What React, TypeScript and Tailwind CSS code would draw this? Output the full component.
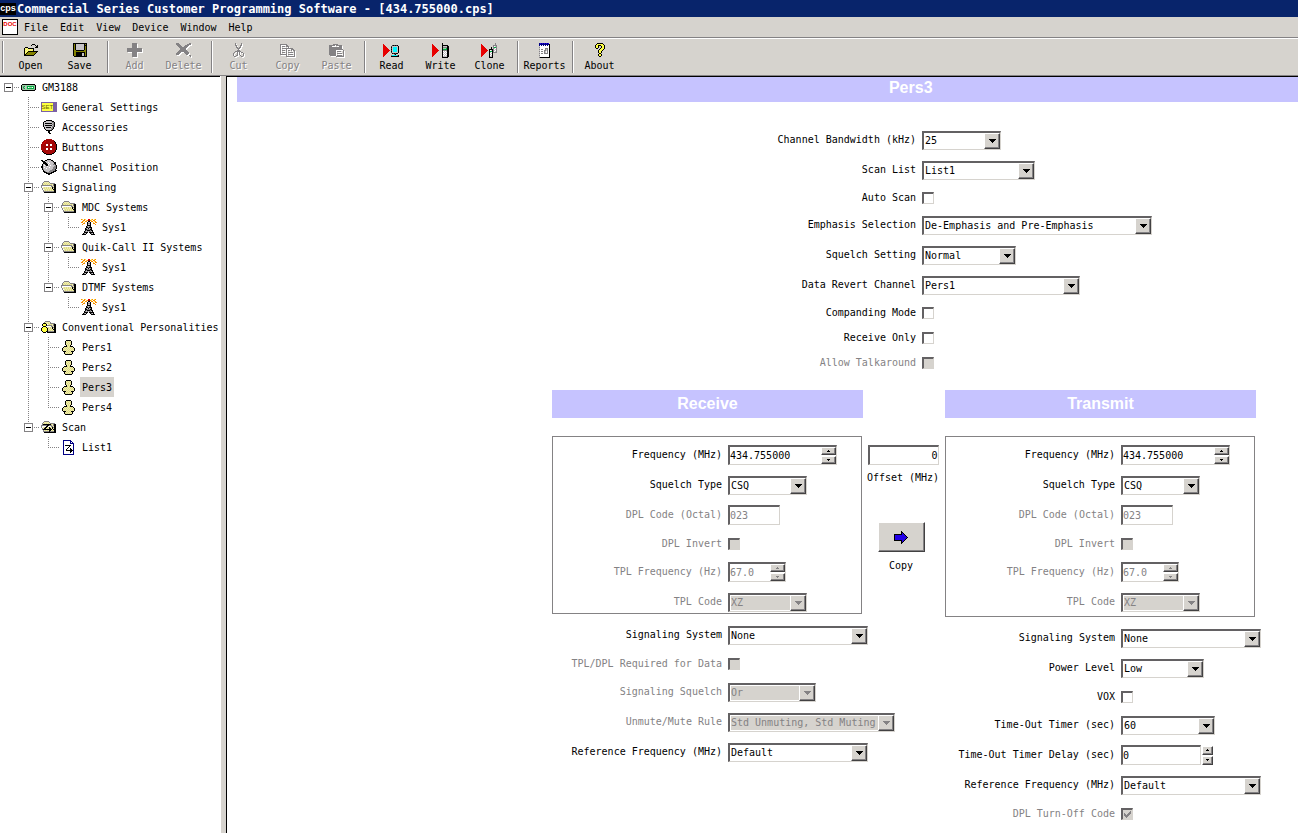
import { useId } from "react";
import type { ReactNode } from "react";
import { clsx } from "clsx";

const PALETTE: Record<string, string> = {
  k: "#000000",
  w: "#ffffff",
  g: "#848284",
  l: "#c6c3c6",
  d: "#424142",
  y: "#ffff42",
  e: "#dedb84",
  v: "#efebad",
  o: "#848200",
  c: "#00f3ff",
  r: "#e70000",
  m: "#a50808",
  b: "#2100e7",
  u: "#000084",
  n: "#00ae42",
  t: "#9ccfa5",
  f: "#f78a00",
  s: "#ffdb42",
};

// Each sprite is a list of pixel rows, one palette letter per pixel.
const SPRITES: Record<string, string[]> = {
  open: [
    ".........kkk....",
    "........k...k.k.",
    ".............kk.",
    "..kkk.......kkk.",
    ".kvyvkkkkkk.....",
    ".kyvyvyvyvk.....",
    ".kvyvyvyvyk.....",
    ".kyvykkkkkkkkkk.",
    ".kvykooooooook..",
    ".kykooooooook...",
    ".kkooooooook....",
    ".kkkkkkkkkk.....",
  ],
  save: [
    "kkkkkkkkkkkkkk",
    "kokllllllllkok",
    "kokllllllllkkk",
    "kokllllllllkok",
    "kokllllllllkok",
    "kokllllllllkok",
    "kokllllllllkok",
    "kookkkkkkkkook",
    "kooooooooooook",
    "kookkkkkkkkkok",
    "kookkkkkkllkok",
    "kookkkkkkllkok",
    "kookkkkkkllkok",
    ".kkkkkkkkkkkkk",
  ],
  add: [
    ".....ggggg.....",
    ".....ggggg.....",
    ".....ggggg.....",
    ".....ggggg.....",
    ".....ggggg.....",
    "ggggggggggggggg",
    "ggggggggggggggg",
    "ggggggggggggggg",
    "ggggggggggggggg",
    ".....ggggg.....",
    ".....ggggg.....",
    ".....ggggg.....",
    ".....ggggg.....",
    ".....ggggg.....",
  ],
  remove: [
    "ggg..........gg.",
    "gggg.......gggg.",
    ".gggg....gggg...",
    "..gggg..gggg....",
    "...gggggggg.....",
    "....gggggg......",
    "....gggggg......",
    "...gggggggg.....",
    "..gggggggggg....",
    ".gggg...ggggg...",
    "gggg.....gggg...",
    "ggg.......gg....",
    ".............gg.",
    "..............g.",
  ],
  cut: [
    "..g.....g..",
    "..g.....g..",
    "..gg...gg..",
    "...g...g...",
    "...gg.gg...",
    "....ggg....",
    ".....g.....",
    "....ggg....",
    "..gggggg...",
    ".g..g.g.gg.",
    "g...g.g...g",
    "g...g.g...g",
    "g..gg..g..g",
    ".gg.....gg.",
  ],
  copy: [
    "ggggggg.........",
    "g.....gg........",
    "g.ggg.ggg.......",
    "g.......g.......",
    "g.ggggggggggg...",
    "g.....g....ggg..",
    "g.ggg.g.gg.g.gg.",
    "g.....g.......g.",
    "g.ggg.g.ggggg.g.",
    "g.....g.......g.",
    "ggggggg.ggggg.g.",
    "......g.......g.",
    "......ggggggggg.",
  ],
  paste: [
    "....ggggg......",
    "gggggg.gggggg..",
    "ggg.......ggg..",
    "ggggggggggggg..",
    "ggggggggggggg..",
    "gggggggggggggg.",
    "ggggggg.......g",
    "ggggggg.gggg..g",
    "ggggggg.......g",
    "ggggggg.ggggg.g",
    "ggggggg.......g",
    ".gggggg.ggggg.g",
    ".......gggggggg",
  ],
  read: [
    "r................",
    "rr.......dkdkdk..",
    "rrr.....dllllllk.",
    "rrrr....klcccclk.",
    "rrrrr...dlcccclk.",
    "rrrrrr..klcccclk.",
    "rrrrrrr.dlcccclk.",
    "rrrrrr..klcccclk.",
    "rrrrr...dllllllk.",
    "rrrr.....kdkdkk..",
    "rrr........gk....",
    "rr......gcccccgk.",
    "r.......kkkkkkkk.",
  ],
  write: [
    "..........k......",
    "r.........k......",
    "rr........kkkkkk.",
    "rrr.......kllllkk",
    "rrrr......kggggkk",
    "rrrrr.....ktttnkk",
    "rrrrrr....knnnnkk",
    "rrrrrrr...kggggkk",
    "rrrrrr....kwlwlkk",
    "rrrrr.....klwlwkk",
    "rrrr......kwlwlkk",
    "rrr.......klwlwkk",
    "rr........kwlwlkk",
    "r.........kllllkk",
    "..........kkkkkk.",
  ],
  clone: [
    "..............g..",
    "r.............g..",
    "rr..........gggg.",
    "rrr.........gwlg.",
    "rrrr......k.gnng.",
    "rrrrr.....k.glwg.",
    "rrrrrr..kkkkgwlg.",
    "rrrrrrr.kwlkglwg.",
    "rrrrrr..knnkgwlg.",
    "rrrrr...klwkgggg.",
    "rrrr....kwlk.....",
    "rrr.....klwk.....",
    "rr......kwlk.....",
    "r.......kllk.....",
    "........kkkk.....",
  ],
  reports: [
    "ububububub.",
    "uuuuuuuuuuk",
    "uwuwuwuwuwk",
    "lwwwwwwwwwk",
    "gwwwwwwwwwk",
    "lwwwwwgggwk",
    "gwggwwglgwk",
    "lwwwwgglgwk",
    "gwggwglwgwk",
    "lwwwwglwgwk",
    "gwggwggggwk",
    "lwwwwwwwwwk",
    "gwwwwwwwwwk",
    "lwwwwwwwwwk",
    "gkkkkkkkkkk",
  ],
  about: [
    "..kkkkkk..",
    ".kyyyyyyk.",
    "kyykkkyyyk",
    "kyyk..kyyk",
    "kyyk..kyyk",
    ".kk..kyyyk",
    "....kyyyk.",
    "...kyyyk..",
    "...kyyk...",
    "...kyyk...",
    "....kk....",
    "...kyyk...",
    "...kyyk...",
    "....kk....",
  ],
  radio: [
    ".kkkkkkkkkkkkk.",
    "kttttttttttttgk",
    "ktgnltnnnnnnntk",
    "ktntltnwtttwntk",
    "ktgnltnnnnnnntk",
    "kgtttttttttttgk",
    ".kkkkkkkkkkkkk.",
  ],
  mic: [
    "....kkkkkk....",
    "..kklllllgkk..",
    ".kllllllllggk.",
    ".klkkkkkkklgk.",
    ".kllllllllggk.",
    ".klkkkkkkklgk.",
    ".kllllllllggk.",
    "..klkkkkklgk..",
    "..kllllllggk..",
    "...klllllgk...",
    "....kkkkkk....",
    "......kk......",
    "......kk......",
    ".......kk.....",
  ],
  knob: [
    "......kkkk......",
    "kk..kkllllkk....",
    ".kkklllllllgk...",
    "..kkkllwllllgkk.",
    "..kkkkllwllllkk.",
    ".kllkkkwllllggk.",
    ".klwlkkllwllllgk",
    "kkllllwllllllggk",
    "kklwllllwlllgggk",
    ".klllwllllllgggk",
    ".kgllllllllgggk.",
    "..kllllllgggggkk",
    "..kkglllggggkkk.",
    "...kkkggggkkk...",
    ".....kkkkkk.....",
    ".......kk.......",
  ],
  button: [
    ".....mmmmmm.....",
    "...mmmmmmmmmm...",
    "..mmrmmmmmmmmk..",
    ".mmrmmmmmmmmmmk.",
    ".mrmmmmmmmmmmmk.",
    "mmmmmwwmmwwmmmmk",
    "mmmmmwwmmwwmmmmk",
    "mmmmmmmmmmmmmmmk",
    "mmmmmmmmmmmmmmmk",
    "mmmmmwwmmwwmmmmk",
    "mmmmmwwmmwwmmmmk",
    ".mmmmmmmmmmmmmk.",
    ".kmmmmmmmmmmmmk.",
    "..kmmmmmmmmmmk..",
    "...kkmmmmmmkk...",
    ".....kkkkkk.....",
  ],
  folder: [
    "...ggggg.......",
    "..gvvvvvg......",
    ".gvevevevggggg.",
    ".gevevevevevgkk",
    "gggggggggggvgkk",
    "gwwwwwwwwwggvkk",
    "gwvevevevevkgkk",
    ".gvevevevevkvkk",
    ".gwvevevevevkkk",
    "..gvevevevevekk",
    "..gggggggggggkk",
    "...kkkkkkkkkkkk",
  ],
  people: [
    "....ggggg......",
    "...gvvvvvg.....",
    "..kkkevevggggg.",
    ".kyyykwvevevgkk",
    ".kyyykgggggvgkk",
    "..kkkwwwwwggvkk",
    ".kyyykvevevkgkk",
    "kyyyyykevevkvkk",
    "kyyyyykvevevkkk",
    "kyyyyykevevevkk",
    ".kyyykkggggggkk",
    "..kkk.kkkkkkkkk",
  ],
  scanFolder: [
    "...ggggg.......",
    "..gvvvvvg......",
    ".gvevevevggggg.",
    ".gkkkkkkkkevgkk",
    "ggggggkkgggvgkk",
    "gwwwwkkwwwggvkk",
    "gwvekkvekevkgkk",
    ".gvkkvevkkvkvkk",
    ".gkkkkkkkkkvkkk",
    "..gvevevkkvevkk",
    "..ggggggkggggkk",
    "...kkkkkkkkkkkk",
  ],
  tower: [
    "fs.fs..rr.sf.sf.",
    "..ff.sfmmfs.ff..",
    ".fs.ff.kk.ff.sf.",
    "ff.s..kllk..s.ff",
    "..ff..kggk..ff..",
    ".f....kllk....f.",
    "......kkkk......",
    ".....kglgk......",
    ".....kkgkkk.....",
    "....kglklgk.....",
    "....kkgggkk.....",
    "....kgkkkgkk....",
    "...kglglgglk....",
    "...kkkk.kkkkk...",
    "..kglk...kglk...",
    ".kkkk.....kkkk..",
  ],
  person: [
    "....kkkkk....",
    "...kvevevk...",
    "...kevevek...",
    "...kvevevk...",
    "...kevevek...",
    "....kvevk....",
    "..kkkevekkk..",
    ".kvevevevevk.",
    "kvevevevevevk",
    "kevevevevevek",
    "kvevevevevevk",
    ".kkkvevevkkk.",
    "..kvevevevk..",
    "..kevevevek..",
    "...kkkkkkk...",
  ],
  list: [
    "uuuuuuuu...",
    "uwwwwwwuu..",
    "uwwwwwwuwu.",
    "uwwwwwwuuuu",
    "uwwwwwwwwwu",
    "uwkkkkkkwwu",
    "uwwwwwkwwwu",
    "uwwwwkwwwwu",
    "uwwwkwwkwwu",
    "uwwkwwwkkwu",
    "uwwkkkkkkku",
    "uwwwwwwkkwu",
    "uwwwwwwkwwu",
    "uwwwwwwwwwu",
    "uuuuuuuuuuu",
  ],
  arrow: [
    ".......k.......",
    ".......kk......",
    ".......kbk.....",
    "kkkkkkkkbbk....",
    "kbbbbbbbbbbk...",
    "kbbbbbbbbbbbk..",
    "kbbbbbbbbbbbbk.",
    "kbbbbbbbbbbbk..",
    "kbbbbbbbbbbk...",
    "kkkkkkkkbbk....",
    ".......kbk.....",
    ".......kk......",
    ".......k.......",
  ],
};

function Sprite({ name, etched }: { name: string; etched?: boolean }) {
  const rows = SPRITES[name];
  const width = Math.max(...rows.map((row) => row.length));
  const runs: { x: number; y: number; w: number; fill: string }[] = [];
  rows.forEach((row, y) => {
    let x = 0;
    while (x < row.length) {
      let end = x + 1;
      while (end < row.length && row[end] === row[x]) end++;
      if (row[x] !== ".") runs.push({ x, y, w: end - x, fill: PALETTE[row[x]] });
      x = end;
    }
  });
  return (
    <svg
      width={width}
      height={rows.length}
      shapeRendering="crispEdges"
      className="shrink-0 overflow-visible"
      aria-hidden="true"
    >
      {etched &&
        runs.map((run, i) => (
          <rect key={i} x={run.x + 1} y={run.y + 1} width={run.w} height={1} fill="#ffffff" />
        ))}
      {runs.map((run, i) => (
        <rect key={i} x={run.x} y={run.y} width={run.w} height={1} fill={run.fill} />
      ))}
    </svg>
  );
}

const SUNKEN =
  "border-t-2 border-l-2 border-r border-b border-t-[#636163] border-l-[#636163] border-r-[#d6d3ce] border-b-[#d6d3ce]";
const RAISED =
  "border border-t-white border-l-white border-r-[#424142] border-b-[#424142] bg-[#d6d3ce] shadow-[inset_-1px_-1px_0_#848284]";

const MENUS = ["File", "Edit", "View", "Device", "Window", "Help"];

const TOOLS = [
  [
    { label: "Open", icon: "open" },
    { label: "Save", icon: "save" },
  ],
  [
    { label: "Add", icon: "add", disabled: true },
    { label: "Delete", icon: "remove", disabled: true },
  ],
  [
    { label: "Cut", icon: "cut", disabled: true },
    { label: "Copy", icon: "copy", disabled: true },
    { label: "Paste", icon: "paste", disabled: true },
  ],
  [
    { label: "Read", icon: "read" },
    { label: "Write", icon: "write" },
    { label: "Clone", icon: "clone" },
  ],
  [{ label: "Reports", icon: "reports" }],
  [{ label: "About", icon: "about" }],
] as { label: string; icon: string; disabled?: boolean }[][];

// guides: " " blank, "|" line through, "T" branch, "L" last branch,
// "R" root box, "M" box with siblings below, "E" last box
const TREE = [
  { guides: "R", icon: "radio", label: "GM3188" },
  { guides: " T", icon: "set", label: "General Settings" },
  { guides: " T", icon: "mic", label: "Accessories" },
  { guides: " T", icon: "button", label: "Buttons" },
  { guides: " T", icon: "knob", label: "Channel Position" },
  { guides: " M", icon: "folder", label: "Signaling" },
  { guides: " |M", icon: "folder", label: "MDC Systems" },
  { guides: " ||L", icon: "tower", label: "Sys1" },
  { guides: " |M", icon: "folder", label: "Quik-Call II Systems" },
  { guides: " ||L", icon: "tower", label: "Sys1" },
  { guides: " |E", icon: "folder", label: "DTMF Systems" },
  { guides: " | L", icon: "tower", label: "Sys1" },
  { guides: " M", icon: "people", label: "Conventional Personalities" },
  { guides: " |T", icon: "person", label: "Pers1" },
  { guides: " |T", icon: "person", label: "Pers2" },
  { guides: " |T", icon: "person", label: "Pers3", selected: true },
  { guides: " |L", icon: "person", label: "Pers4" },
  { guides: " E", icon: "scanFolder", label: "Scan" },
  { guides: "  L", icon: "list", label: "List1" },
];

function Guide({ kind }: { kind: string }) {
  const box = "RME".includes(kind);
  return (
    <svg width="20" height="20" shapeRendering="crispEdges" className="shrink-0" aria-hidden="true">
      <g stroke="#848284" strokeDasharray="1 1">
        {"|TLME".includes(kind) && (
          <line x1="8.5" y1="0" x2="8.5" y2={"LE".includes(kind) ? 11 : 20} />
        )}
        {"TLRME".includes(kind) && <line x1="8" y1="10.5" x2="20" y2="10.5" />}
      </g>
      {box && (
        <>
          <rect x="4.5" y="6.5" width="8" height="8" fill="#ffffff" stroke="#848284" />
          <line x1="6" y1="10.5" x2="11" y2="10.5" stroke="#000000" />
        </>
      )}
    </svg>
  );
}

function Tree() {
  return (
    <nav className="w-[220px] shrink-0 overflow-hidden border-t border-black bg-white">
      <ul role="tree" aria-label="Codeplug">
        {TREE.map((node, i) => (
          <li key={i} role="treeitem" aria-selected={!!node.selected} className="flex h-5 items-center">
            {node.guides.split("").map((kind, j) => (
              <Guide key={j} kind={kind} />
            ))}
            <span className="flex w-5 shrink-0 items-center justify-center pr-[3px]">
              {node.icon === "set" ? (
                <span className="h-[10px] w-4 shrink-0 border border-r-4 border-[#7b61a5] bg-[#ffff42] text-center font-['Liberation_Sans',Arial,sans-serif] text-[6px] leading-2 text-[#636100]">
                  SET
                </span>
              ) : (
                <Sprite name={node.icon} />
              )}
            </span>
            <span
              className={clsx(
                "px-[2px] pt-px leading-[19px] whitespace-nowrap",
                node.selected && "bg-[#d6d3ce]"
              )}
            >
              {node.label}
            </span>
          </li>
        ))}
      </ul>
    </nav>
  );
}

interface RowProps {
  label: string;
  id: string;
  disabled?: boolean;
  wide?: boolean;
  short?: boolean;
  children: ReactNode;
}

function Row({ label, id, disabled, wide, short, children }: RowProps) {
  return (
    <div className={clsx("flex items-center gap-[6px]", short ? (wide ? "h-[25px]" : "h-[27px]") : "h-[30px]")}>
      <label
        htmlFor={id}
        className={clsx(
          "shrink-0 text-right whitespace-nowrap",
          wide ? "w-[64%]" : "w-[170px]",
          disabled && "text-[#848284]"
        )}
      >
        {label}
      </label>
      {children}
    </div>
  );
}

interface FieldProps {
  label: string;
  disabled?: boolean;
  wide?: boolean;
}

function Combo({ label, value, width, disabled, wide }: FieldProps & { value: string; width: string }) {
  const id = useId();
  return (
    <Row label={label} id={id} disabled={disabled} wide={wide}>
      <span className={clsx("relative block h-[19px] shrink-0", width)}>
        <select
          id={id}
          disabled={disabled}
          defaultValue={value}
          className={clsx(
            "block h-full w-full appearance-none pl-px leading-4 opacity-100",
            SUNKEN,
            disabled ? "bg-[#d6d3ce] text-[#848284] shadow-[inset_0_0_0_1px_#fff]" : "bg-white"
          )}
        >
          <option>{value}</option>
        </select>
        <span
          className={clsx(
            "pointer-events-none absolute top-[2px] right-px flex h-4 w-4 items-center justify-center",
            RAISED
          )}
        >
          <svg width="7" height="4" shapeRendering="crispEdges" aria-hidden="true">
            <path
              d="M0 0h7v1h-1v1h-1v1h-1v1h-1v-1h-1v-1h-1v-1h-1z"
              fill={disabled ? "#848284" : "#000000"}
            />
          </svg>
        </span>
      </span>
    </Row>
  );
}

function SpinButton({ up, disabled, narrow, label }: { up?: boolean; disabled?: boolean; narrow?: boolean; label: string }) {
  return (
    <button
      type="button"
      aria-label={label}
      disabled={disabled}
      className={clsx(
        "flex items-center justify-center",
        narrow ? "h-[9px] w-[11px]" : "h-2 w-[15px]",
        RAISED
      )}
    >
      <svg width="3" height="2" shapeRendering="crispEdges" aria-hidden="true">
        <path d={up ? "M1 0h1v1h1v1h-3v-1h1z" : "M0 0h3v1h-1v1h-1v-1h-1z"} fill={disabled ? "#848284" : "#000000"} />
      </svg>
    </button>
  );
}

function Spinner({
  label,
  value,
  width,
  disabled,
  detached,
}: FieldProps & { value: string; width: string; detached?: boolean }) {
  const id = useId();
  const buttons = (
    <span className="flex shrink-0 flex-col gap-px">
      <SpinButton up disabled={disabled} narrow={detached} label={`${label} up`} />
      <SpinButton disabled={disabled} narrow={detached} label={`${label} down`} />
    </span>
  );
  const input = (
    <input
      id={id}
      type="text"
      defaultValue={value}
      disabled={disabled}
      className="w-full min-w-0 bg-transparent leading-4 disabled:text-[#848284]"
    />
  );
  return (
    <Row label={label} id={id} disabled={disabled}>
      {detached ? (
        <span className={clsx("flex h-5 shrink-0 items-center gap-px", width)}>
          <span className={clsx("flex h-5 flex-1 items-center bg-white", SUNKEN)}>{input}</span>
          {buttons}
        </span>
      ) : (
        <span className={clsx("flex h-5 shrink-0 items-center bg-white", width, SUNKEN)}>
          {input}
          {buttons}
        </span>
      )}
    </Row>
  );
}

function TextField({ label, value, disabled }: FieldProps & { value: string }) {
  const id = useId();
  return (
    <Row label={label} id={id} disabled={disabled}>
      <input
        id={id}
        type="text"
        defaultValue={value}
        disabled={disabled}
        className={clsx("h-5 w-[52px] bg-white disabled:text-[#848284]", SUNKEN)}
      />
    </Row>
  );
}

function Check({ label, disabled, wide, checked }: FieldProps & { checked?: boolean }) {
  const id = useId();
  return (
    <Row label={label} id={id} disabled={disabled} wide={wide} short>
      <span className="relative block h-3 w-3">
        <input
          id={id}
          type="checkbox"
          defaultChecked={checked}
          disabled={disabled}
          className={clsx("block h-3 w-3 appearance-none", SUNKEN, disabled ? "bg-[#d6d3ce]" : "bg-white")}
        />
        {checked && (
          <svg
            width="7"
            height="7"
            shapeRendering="crispEdges"
            className="pointer-events-none absolute top-[3px] left-[3px]"
            aria-hidden="true"
          >
            <path d="M0 2h1v1h1v1h1v-1h1v-1h1v-1h1v-1h1v3h-1v1h-1v1h-1v1h-1v1h-1v-1h-1v-1h-1z" fill="#848284" />
          </svg>
        )}
      </span>
    </Row>
  );
}

function SectionTitle({ children }: { children: ReactNode }) {
  return (
    <h2 className="h-7 bg-[#c6c3ff] text-center font-['Liberation_Sans',Arial,sans-serif] text-base leading-7 font-bold text-white">
      {children}
    </h2>
  );
}

// Fields that the receive and transmit sides have in common.
function FrequencyGroup({ height }: { height: string }) {
  return (
    <div className={clsx("mt-[18px] mr-px pt-1 ring-1 ring-[#848284] ring-inset", height)}>
      <Spinner label="Frequency (MHz)" value="434.755000" width="w-[109px]" />
      <Combo label="Squelch Type" value="CSQ" width="w-[79px]" />
      <TextField label="DPL Code (Octal)" value="023" disabled />
      <Check label="DPL Invert" disabled />
      <Spinner label="TPL Frequency (Hz)" value="67.0" width="w-[58px]" disabled />
      <Combo label="TPL Code" value="XZ" width="w-[79px]" disabled />
    </div>
  );
}

function Personality() {
  return (
    <main className="min-w-0 flex-1 overflow-hidden border-t border-l border-black bg-white pl-[10px]">
      <h1 className="h-[25px] w-[127%] bg-[#c6c3ff] text-center font-['Liberation_Sans',Arial,sans-serif] text-base leading-[22px] font-bold text-white">
        Pers3
      </h1>
      <form>
        <div className="mt-[23px]">
          <Combo wide label="Channel Bandwidth (kHz)" value="25" width="w-[79px]" />
          <Combo wide label="Scan List" value="List1" width="w-[113px]" />
          <Check wide label="Auto Scan" />
          <Combo wide label="Emphasis Selection" value="De-Emphasis and Pre-Emphasis" width="w-[230px]" />
          <Combo wide label="Squelch Setting" value="Normal" width="w-[94px]" />
          <Combo wide label="Data Revert Channel" value="Pers1" width="w-[158px]" />
          <Check wide label="Companding Mode" />
          <Check wide label="Receive Only" />
          <Check wide label="Allow Talkaround" disabled />
        </div>
        <div className="mt-[15px] flex justify-end pr-[42px]">
          <section className="w-[311px]">
            <SectionTitle>Receive</SectionTitle>
            <FrequencyGroup height="h-[178px]" />
            <div className="mt-[6px]">
              <Combo label="Signaling System" value="None" width="w-[140px]" />
              <Check label="TPL/DPL Required for Data" disabled />
              <Combo label="Signaling Squelch" value="Or" width="w-[88px]" disabled />
              <Combo label="Unmute/Mute Rule" value="Std Unmuting, Std Muting" width="w-[167px]" disabled />
              <Combo label="Reference Frequency (MHz)" value="Default" width="w-[140px]" />
            </div>
          </section>
          <div className="flex w-[82px] flex-col items-center pt-[55px] pr-[2px]">
            <input
              id="offset"
              type="text"
              defaultValue="0"
              className={clsx("h-5 w-[71px] bg-white text-right", SUNKEN)}
            />
            <label htmlFor="offset" className="mt-[5px] leading-4 whitespace-nowrap">
              Offset (MHz)
            </label>
            <div className="mt-9 flex flex-col items-center pr-1">
              <button
                type="button"
                aria-labelledby="copy-caption"
                className={clsx("flex h-[30px] w-[47px] items-center justify-center", RAISED)}
              >
                <Sprite name="arrow" />
              </button>
              <span id="copy-caption" className="mt-[6px] leading-4">
                Copy
              </span>
            </div>
          </div>
          <section className="w-[311px]">
            <SectionTitle>Transmit</SectionTitle>
            <FrequencyGroup height="h-[181px]" />
            <div className="mt-[6px]">
              <Combo label="Signaling System" value="None" width="w-[140px]" />
              <Combo label="Power Level" value="Low" width="w-[83px]" />
              <Check label="VOX" />
              <Combo label="Time-Out Timer (sec)" value="60" width="w-[94px]" />
              <Spinner label="Time-Out Timer Delay (sec)" value="0" width="w-[92px]" detached />
              <Combo label="Reference Frequency (MHz)" value="Default" width="w-[140px]" />
              <Check label="DPL Turn-Off Code" disabled checked />
            </div>
          </section>
        </div>
      </form>
    </main>
  );
}

export default function App() {
  return (
    <div className="flex min-h-screen flex-col overflow-hidden bg-[#d6d3ce] font-['DejaVu_Sans_Mono','Liberation_Mono',monospace] text-[10px] leading-4 text-black">
      <header className="flex h-[17px] items-center bg-[#08246b] text-xs font-bold whitespace-nowrap text-white">
        <span className="mr-px h-3 w-4 bg-black text-center font-['Liberation_Sans',Arial,sans-serif] text-[9px] leading-[10px]">
          cps
        </span>
        <span>Commercial Series Customer Programming Software - [434.755000.cps]</span>
      </header>
      <div className="flex h-[21px] items-center border-b border-[#848284]">
        <span className="ml-[2px] h-4 w-4 border border-black bg-white text-center font-['Liberation_Sans',Arial,sans-serif] text-[6px] leading-2 font-bold text-[#e70000]">
          DOC
        </span>
        <div className="ml-[6px] flex gap-3 pt-px">
          {MENUS.map((menu) => (
            <button key={menu} type="button">
              {menu}
            </button>
          ))}
        </div>
      </div>
      <div className="flex h-[38px] border-t border-b border-t-white border-b-[#848284]">
        {TOOLS.map((group, i) => (
          <div key={i} className="flex">
            <span
              className={clsx(
                "my-[2px] w-[2px] border-l border-l-[#848284] border-r border-r-white",
                i === 0 ? "mr-[2px] ml-[2px]" : "mr-px ml-[3px]"
              )}
            />
            {group.map((tool) => (
              <button
                key={tool.label}
                type="button"
                disabled={tool.disabled}
                className={clsx(
                  "flex w-[49px] flex-col items-center pt-[3px]",
                  tool.disabled && "text-[#848284] [text-shadow:1px_1px_0_#fff]"
                )}
              >
                <span className="flex h-4 items-center">
                  <Sprite name={tool.icon} etched={tool.disabled} />
                </span>
                <span className="leading-4">{tool.label}</span>
              </button>
            ))}
          </div>
        ))}
      </div>
      <div className="flex flex-1">
        <Tree />
        <div className="w-[6px] shrink-0 bg-[#d6d3ce] shadow-[inset_1px_0_0_#fff]" />
        <Personality />
      </div>
    </div>
  );
}
